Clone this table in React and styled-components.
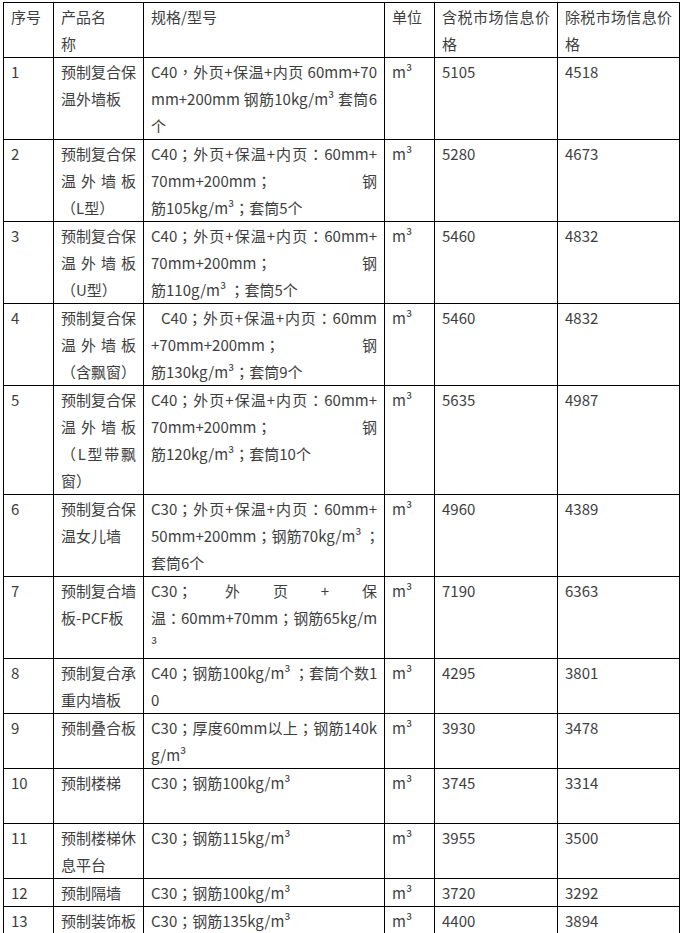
import React from 'react'
import styled, { createGlobalStyle } from 'styled-components'

const GlobalStyle = createGlobalStyle`
  html, body {
    margin: 0;
    padding: 0;
    background: #fff;
  }
  body {
    font-family: "Noto Sans CJK SC", "Noto Sans", sans-serif;
    color: #3e3e3e;
  }
`

const Page = styled.div`
  padding: 2px 0 0 3px;
`

const Table = styled.table`
  border-collapse: collapse;
  table-layout: fixed;
  width: 677px;
  font-size: 15px;
  line-height: 27px;
`

const Cell = styled.td`
  border: 1px solid #000;
  padding: 0 7px;
  vertical-align: top;
  text-align: left;
  font-weight: normal;
  word-break: break-all;
`

const HeadCell = styled(Cell).attrs({ as: 'th' })``

const Row = styled.tr`
  height: ${(p) => (p.$tall ? '55px' : 'auto')};
`

// one printed line of a cell; every line but the last is justified like the original text
const Line = styled.div`
  white-space: nowrap;
  text-align: ${(p) => (p.$justify ? 'justify' : 'left')};
  text-align-last: ${(p) => (p.$justify ? 'justify' : 'auto')};
  padding-left: ${(p) => (p.$indent ? '10px' : '0')};
`

// full-width punctuation sits centred in its em box, as in the screenshot
const Punct = styled.span`
  font-family: "Noto Sans CJK TC", "Noto Sans CJK SC", sans-serif;
`

const columns = [50, 90, 241, 50, 123, 122]

const rows = [
  {
    no: '1',
    name: ['预制复合保', '温外墙板'],
    spec: ['C40，外页+保温+内页 60mm+70', 'mm+200mm 钢筋10kg/m³ 套筒6', '个'],
    tax: '5105',
    net: '4518',
  },
  {
    no: '2',
    name: ['预制复合保', '温外墙板', '（L型）'],
    spec: ['C40；外页+保温+内页：60mm+', '70mm+200mm；钢', '筋105kg/m³；套筒5个'],
    tax: '5280',
    net: '4673',
  },
  {
    no: '3',
    name: ['预制复合保', '温外墙板', '（U型）'],
    spec: ['C40；外页+保温+内页：60mm+', '70mm+200mm；钢', '筋110g/m³ ；套筒5个'],
    tax: '5460',
    net: '4832',
  },
  {
    no: '4',
    name: ['预制复合保', '温外墙板', '（含飘窗）'],
    spec: ['C40；外页+保温+内页：60mm', '+70mm+200mm；钢', '筋130kg/m³；套筒9个'],
    indent: true,
    tax: '5460',
    net: '4832',
  },
  {
    no: '5',
    name: ['预制复合保', '温外墙板', '（L型带飘', '窗）'],
    spec: ['C40；外页+保温+内页：60mm+', '70mm+200mm；钢', '筋120kg/m³；套筒10个'],
    tax: '5635',
    net: '4987',
  },
  {
    no: '6',
    name: ['预制复合保', '温女儿墙'],
    spec: ['C30；外页+保温+内页：60mm+', '50mm+200mm；钢筋70kg/m³ ；', '套筒6个'],
    tax: '4960',
    net: '4389',
  },
  {
    no: '7',
    name: ['预制复合墙', '板-PCF板'],
    spec: ['C30；外页+保', '温：60mm+70mm；钢筋65kg/m', '³'],
    tax: '7190',
    net: '6363',
  },
  {
    no: '8',
    name: ['预制复合承', '重内墙板'],
    spec: ['C40；钢筋100kg/m³ ；套筒个数1', '0'],
    tax: '4295',
    net: '3801',
  },
  {
    no: '9',
    name: ['预制叠合板'],
    spec: ['C30；厚度60mm以上；钢筋140k', 'g/m³'],
    tax: '3930',
    net: '3478',
  },
  {
    no: '10',
    name: ['预制楼梯'],
    spec: ['C30；钢筋100kg/m³'],
    tall: true,
    tax: '3745',
    net: '3314',
  },
  {
    no: '11',
    name: ['预制楼梯休', '息平台'],
    spec: ['C30；钢筋115kg/m³'],
    tax: '3955',
    net: '3500',
  },
  {
    no: '12',
    name: ['预制隔墙'],
    spec: ['C30；钢筋100kg/m³'],
    tax: '3720',
    net: '3292',
  },
  {
    no: '13',
    name: ['预制装饰板'],
    spec: ['C30；钢筋135kg/m³'],
    tax: '4400',
    net: '3894',
  },
]

const withPunct = (text) =>
  text.split(/([，；：（）])/).map((part, i) =>
    /^[，；：（）]$/.test(part) ? <Punct key={i}>{part}</Punct> : part
  )

const Lines = ({ lines, indent }) =>
  lines.map((text, i) => (
    <Line key={i} $justify={i < lines.length - 1} $indent={indent && i === 0}>
      {withPunct(text)}
    </Line>
  ))

const App = () => (
  <Page>
    <GlobalStyle />
    <Table>
      <colgroup>
        {columns.map((w, i) => (
          <col key={i} style={{ width: w }} />
        ))}
      </colgroup>
      <thead>
        <Row>
          <HeadCell>序号</HeadCell>
          <HeadCell>
            <Line>产品名</Line>
            <Line>称</Line>
          </HeadCell>
          <HeadCell>规格/型号</HeadCell>
          <HeadCell>单位</HeadCell>
          <HeadCell>
            <Lines lines={['含税市场信息价', '格']} />
          </HeadCell>
          <HeadCell>
            <Lines lines={['除税市场信息价', '格']} />
          </HeadCell>
        </Row>
      </thead>
      <tbody>
        {rows.map((r) => (
          <Row key={r.no} $tall={r.tall}>
            <Cell>{r.no}</Cell>
            <Cell>
              <Lines lines={r.name} />
            </Cell>
            <Cell>
              <Lines lines={r.spec} indent={r.indent} />
            </Cell>
            <Cell>m³</Cell>
            <Cell>{r.tax}</Cell>
            <Cell>{r.net}</Cell>
          </Row>
        ))}
      </tbody>
    </Table>
  </Page>
)

export default App
